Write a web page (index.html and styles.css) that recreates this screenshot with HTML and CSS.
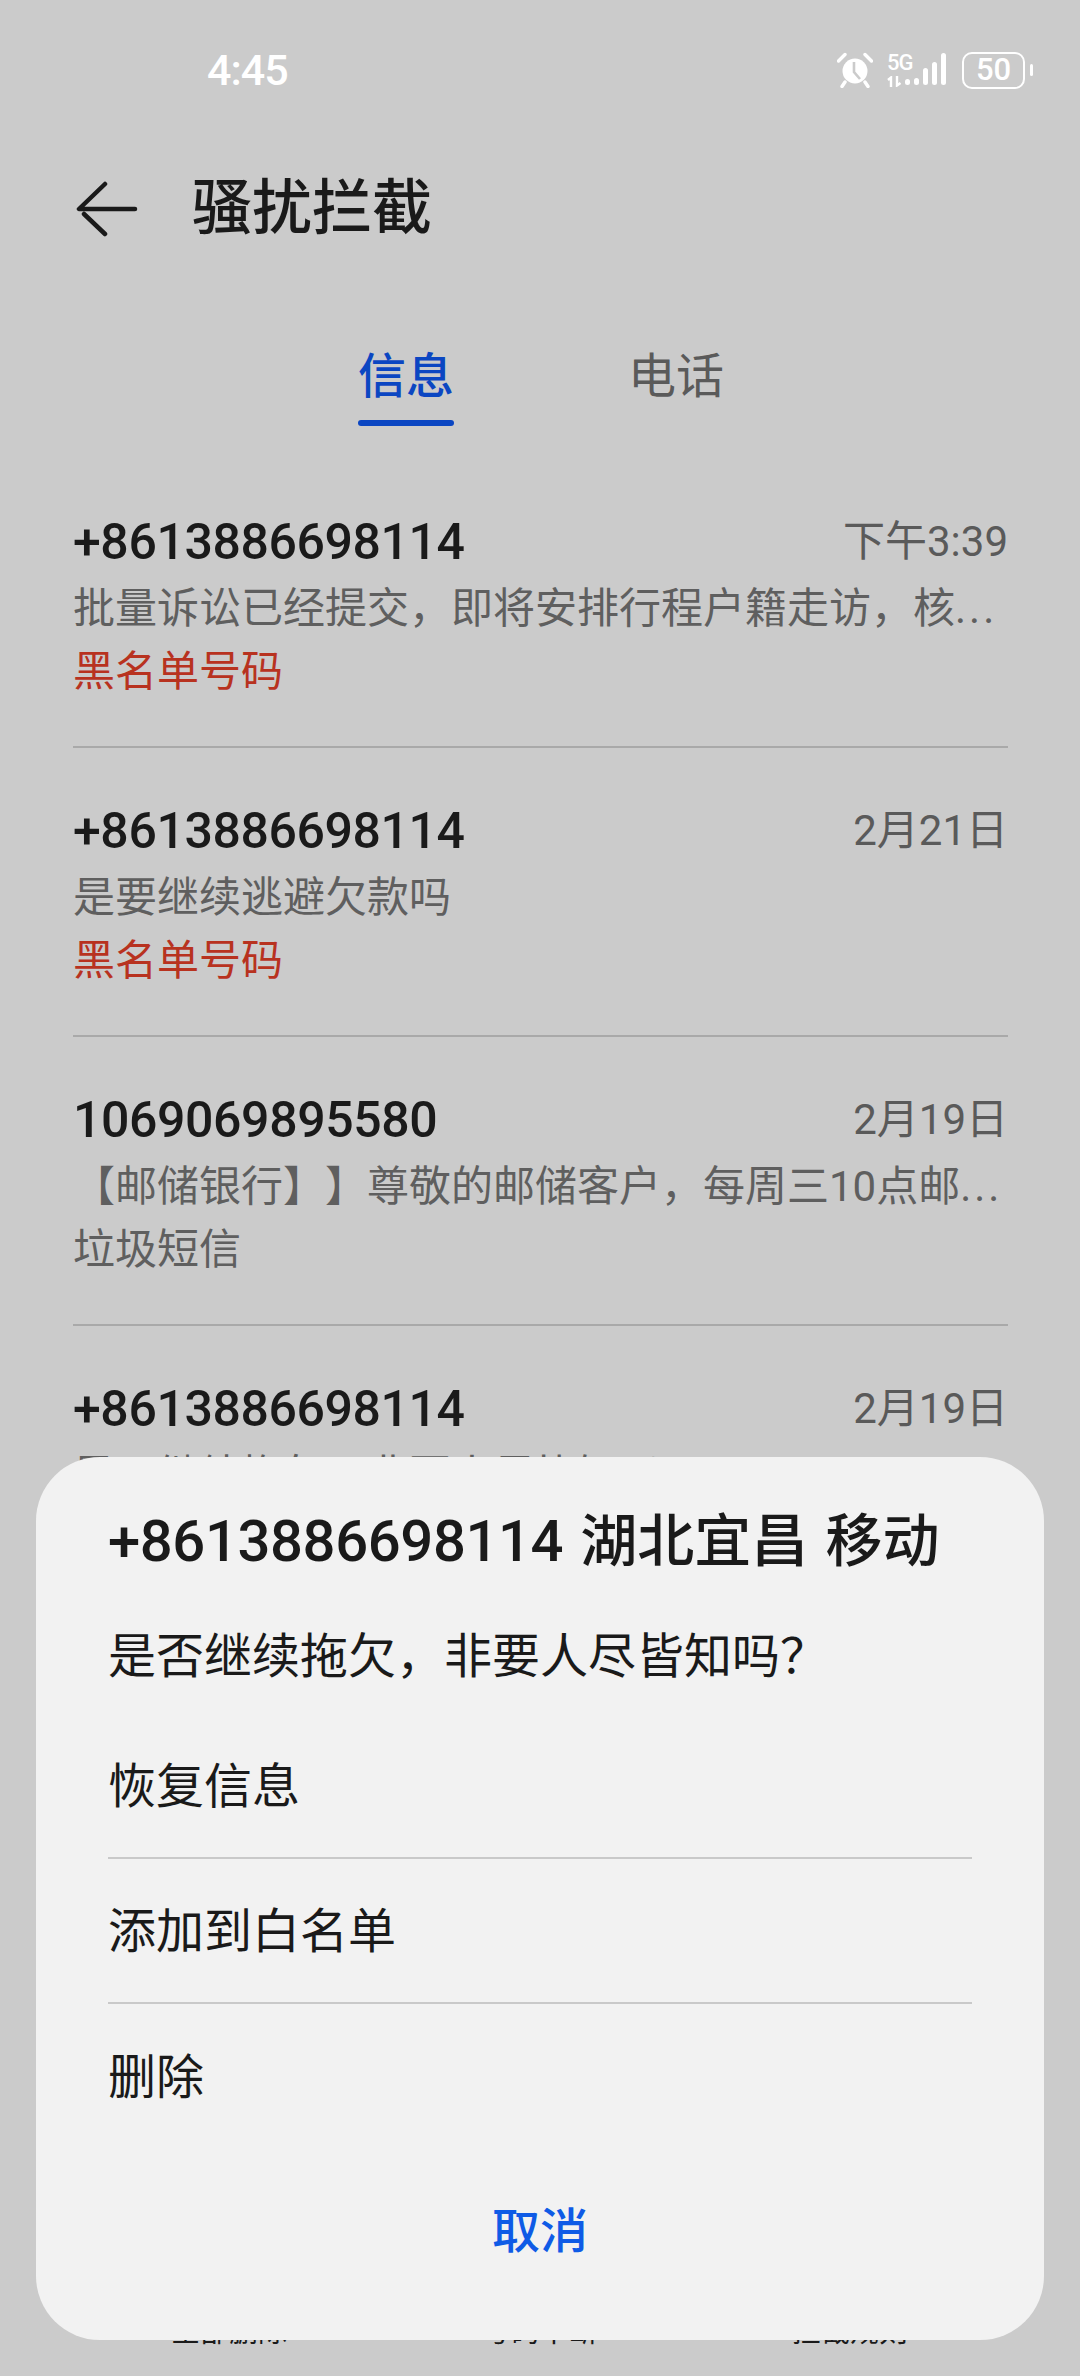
FILE: index.html
```html
<!DOCTYPE html>
<html lang="zh">
<head>
<meta charset="utf-8">
<title>骚扰拦截</title>
<link rel="stylesheet" href="styles.css">
</head>
<body>
<div class="page">
  <header class="status">
    <span class="clock">4:45</span>
    <div class="status-icons">
      <svg class="alarm" viewBox="0 0 36 36" width="36" height="36">
        <circle cx="18" cy="19" r="12.5" fill="#fff"/>
        <path d="M17 10v10l6 7" fill="none" stroke="#cbcbcb" stroke-width="2.6"/>
        <path d="M1.500 9 8 2.500M34.500 9 28 2.500M8 30l-3 4.500M28 30l3 4.500" fill="none" stroke="#fff" stroke-width="3.400" stroke-linecap="round"/>
      </svg>
      <div class="net">
        <span class="net-5g">5G</span>
        <svg class="net-arrows" viewBox="0 0 16 11" width="16" height="11">
          <path d="M4 11V1.500L1 4M10 0v9.500L13.500 7" fill="none" stroke="#fff" stroke-width="2.400"/>
        </svg>
      </div>
      <div class="bars">
        <i class="bar b1"></i><i class="bar b2"></i><i class="bar b3"></i><i class="bar b4"></i><i class="bar b5"></i>
      </div>
      <div class="battery"><span class="battery-box">50</span><i class="battery-tip"></i></div>
    </div>
  </header>

  <div class="toolbar">
    <svg class="back" viewBox="0 0 64 56" width="64" height="56">
      <path d="M29 3 3 28h56M8 33l21 20" fill="none" stroke="#1a1a1a" stroke-width="4.500" stroke-linecap="round" stroke-linejoin="round"/>
    </svg>
    <h1 class="title">骚扰拦截</h1>
  </div>

  <nav class="tabs">
    <div class="tab tab-on">信息<i class="tab-line"></i></div>
    <div class="tab">电话</div>
  </nav>

  <ul class="list">
    <li class="row">
      <div class="row-top"><span class="num">+8613886698114</span><span class="date">下午3:39</span></div>
      <div class="preview">批量诉讼已经提交，即将安排行程户籍走访，核<span class="dots">...</span></div>
      <div class="tag tag-red">黑名单号码</div>
    </li>
    <li class="row">
      <div class="row-top"><span class="num">+8613886698114</span><span class="date">2月21日</span></div>
      <div class="preview">是要继续逃避欠款吗</div>
      <div class="tag tag-red">黑名单号码</div>
    </li>
    <li class="row">
      <div class="row-top"><span class="num">1069069895580</span><span class="date">2月19日</span></div>
      <div class="preview">【邮储银行】】尊敬的邮储客户，每周三10点邮<span class="dots">...</span></div>
      <div class="tag">垃圾短信</div>
    </li>
    <li class="row">
      <div class="row-top"><span class="num">+8613886698114</span><span class="date">2月19日</span></div>
      <div class="preview">是否继续拖欠，非要人尽皆知吗？</div>
    </li>
  </ul>

  <footer class="bottom">
    <span>全部删除</span><span>号码中断</span><span>拦截规则</span>
  </footer>

  <section class="sheet">
    <h2 class="sheet-title"><span class="sheet-num">+8613886698114</span> 湖北宜昌 移动</h2>
    <p class="sheet-msg">是否继续拖欠，非要人尽皆知吗？</p>
    <div class="option">恢复信息</div>
    <div class="option">添加到白名单</div>
    <div class="option">删除</div>
    <div class="cancel">取消</div>
  </section>
</div>
</body>
</html>
```
FILE: styles.css
```css
* { box-sizing: border-box; margin: 0; padding: 0; }
html, body { width: 1080px; height: 2376px; overflow: hidden; }
body { font-family: "Roboto", "Noto Sans CJK SC", sans-serif; background: #cbcbcb; color: #1a1a1a; }
.page { position: relative; width: 1080px; height: 2376px; overflow: hidden; background: #cbcbcb; }

.status { height: 140px; display: flex; align-items: flex-start; justify-content: space-between; padding: 47px 47px 0 207px; }
.clock { font-size: 43px; line-height: 46px; color: #fff; font-weight: 500; letter-spacing: -1px; }
.status-icons { display: flex; align-items: center; height: 40px; margin-top: 3px; }
.alarm { margin-right: 14px; flex: none; }
.net { display: flex; flex-direction: column; width: 18px; color: #fff; gap: 3px; }
.net-5g { font-size: 22px; line-height: 20px; font-weight: 500; letter-spacing: -1px; white-space: nowrap; }
.bars { display: flex; align-items: flex-end; gap: 4px; width: 42px; height: 32px; margin: 0 15px 2px 0; }
.bar { width: 5px; background: #fff; border-radius: 2.5px; display: block; flex: none; }
.b1 { height: 6px; }
.b2 { height: 7px; }
.b3 { height: 17px; }
.b4 { height: 23px; }
.b5 { height: 32px; }
.battery { display: flex; align-items: center; gap: 5px; }
.battery-box { width: 63px; height: 37px; border: 2.5px solid #fff; border-radius: 10px; color: #fff; font-size: 31px; line-height: 32px; text-align: center; font-weight: 500; }
.battery-tip { width: 3px; height: 12px; background: #fff; border-radius: 2px; display: block; }

.toolbar { height: 130px; display: flex; align-items: center; padding: 8px 0 0 76px; }
.back { margin-right: 52px; flex: none; }
.title { font-size: 60px; line-height: 72px; font-weight: 500; color: #1a1a1a; }

.tabs { display: flex; justify-content: center; gap: 174px; padding: 75px 0 0 2px; height: 200px; }
.tab { position: relative; font-size: 48px; line-height: 64px; height: 64px; color: #5a5a5a; }
.tab-on { color: #0b46c2; font-weight: 500; }
.tab-line { position: absolute; left: 0; right: 0; bottom: -17px; height: 6px; border-radius: 3px; background: #0b46c2; display: block; }

.list { list-style: none; padding: 0 72px 0 73px; margin-top: -11px; }
.row { height: 289px; padding-top: 51px; border-bottom: 2px solid #a9a9a9; }
.row:last-child { border-bottom: none; }
.row-top { display: flex; justify-content: space-between; align-items: center; height: 64px; }
.num { font-size: 50px; line-height: 64px; color: #1a1a1a; font-weight: 500; letter-spacing: -0.4px; }
.date { font-size: 42px; line-height: 64px; color: #5a5a5a; }
.preview { font-size: 42px; line-height: 70px; height: 68px; color: #5f5f5f; white-space: nowrap; text-spacing-trim: space-all; }
.dots { letter-spacing: 3px; }
.tag { font-size: 42px; line-height: 60px; color: #5f5f5f; }
.tag-red { color: #b8321f; }

.bottom { position: absolute; left: 0; right: 0; top: 2312px; display: flex; justify-content: space-between; padding: 0 172px 0 171px; font-size: 29px; line-height: 40px; color: #1a1a1a; }

.sheet { position: absolute; left: 36px; top: 1457px; width: 1008px; height: 883px; border-radius: 64px; background: #f2f2f2; padding: 0 72px; overflow: hidden; }
.sheet-title { font-size: 57px; line-height: 64px; height: 70px; font-weight: 500; color: #1a1a1a; margin-top: 52px; white-space: nowrap; word-spacing: 3px; }
.sheet-num { font-size: 58px; letter-spacing: -0.4px; }
.sheet-msg { font-size: 48px; line-height: 60px; color: #1a1a1a; margin-top: 48px; margin-bottom: 27px; }
.option { height: 145px; display: flex; align-items: center; padding-bottom: 7px; font-size: 48px; color: #1a1a1a; border-bottom: 2px solid #c9c9c9; }
.option:nth-of-type(3) { border-bottom: none; }
.cancel { text-align: center; font-size: 48px; line-height: 64px; font-weight: 500; color: #0f5be6; margin-top: 51px; }
```
